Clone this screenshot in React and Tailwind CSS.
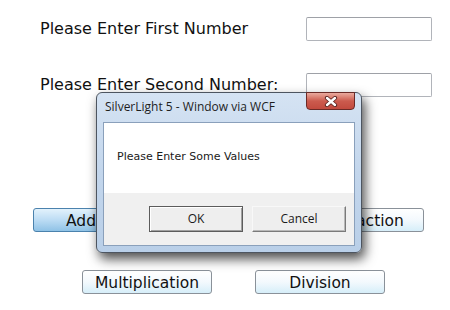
const labelFont = { fontFamily: '"DejaVu Sans", Verdana, sans-serif' };
const uiFont = { fontFamily: '"Open Sans", "Noto Sans", sans-serif' };

const TextBox = () => (
    <div className="w-[126px] h-[24px] bg-white border border-[#b1b4ba] border-t-[#9ea1a7] rounded-[2px]" />
);

const SlButton = ({ label, active }) => (
    <button
        className={
            "w-[130px] h-[24px] pt-[3px] rounded-[3px] border text-[15.5px] leading-none text-[#111] flex items-center justify-center " +
            (active
                ? "border-[#4b82ad] bg-gradient-to-b from-[#e3f2fc] via-[#bcdcf4] to-[#8fc2e6]"
                : "border-[#8a9199] bg-gradient-to-b from-[#ffffff] via-[#f3f9fd] to-[#d6eef9]")
        }
        style={labelFont}
    >
        {label}
    </button>
);

const CloseIcon = () => (
    <svg width="14" height="11" viewBox="0 0 14 11">
        <path d="M3 2 L11 9 M11 2 L3 9" stroke="#5a2420" strokeWidth="4.2" strokeLinecap="round" />
        <path d="M3 2 L11 9 M11 2 L3 9" stroke="#ffffff" strokeWidth="2.4" strokeLinecap="round" />
    </svg>
);

const Dialog = () => (
    <div className="absolute left-[96px] top-[92px] w-[266px] h-[161px] rounded-[6px] border border-[#4d5560] bg-gradient-to-b from-[#d5e3f3] via-[#c3d6ec] to-[#b9cfe8] shadow-[3px_6px_12px_rgba(0,0,0,0.7)] flex flex-col">
        <div className="h-[29px] flex items-start relative">
            <span className="pl-[8px] pt-[5px] text-[12px] text-[#1e1e1e]" style={uiFont}>
                SilverLight 5 - Window via WCF
            </span>
            <div className="absolute right-[6px] -top-px w-[49px] h-[18px] rounded-b-[4px] border border-[#6b2a26] bg-gradient-to-b from-[#e9aa9e] via-[#cc5b4e] to-[#c24a3e] flex items-center justify-center">
                <CloseIcon />
            </div>
        </div>
        <div className="mx-[6px] mb-[6px] flex-1 border border-[#8aa0bb] flex flex-col">
            <div className="h-[70px] bg-white flex items-center pl-[13px] pb-[2px]">
                <span className="text-[11px] text-[#1a1a1a]" style={labelFont}>
                    Please Enter Some Values
                </span>
            </div>
            <div className="flex-1 bg-[#f0f0f0] flex justify-end items-start pt-[13px] pr-[8px] gap-[9px]">
                <button
                    className="w-[94px] h-[26px] border border-[#5c5c5c] bg-[#eeeeee] shadow-[inset_1px_1px_0_#ffffff,inset_-1px_-1px_0_#a0a0a0] text-[12px] text-[#1a1a1a] flex items-center justify-center"
                    style={uiFont}
                >
                    OK
                </button>
                <button
                    className="w-[94px] h-[26px] border border-[#f8f8f8] border-r-[#7a7a7a] border-b-[#7a7a7a] bg-[#eeeeee] shadow-[inset_-1px_-1px_0_#b8b8b8] text-[12px] text-[#1a1a1a] flex items-center justify-center"
                    style={uiFont}
                >
                    Cancel
                </button>
            </div>
        </div>
    </div>
);

const App = () => {
    return (
        <div className="relative w-[450px] h-[310px] bg-white overflow-hidden">
            <div className="flex items-center pt-[17px] pl-[40px]">
                <span className="w-[266px] text-[16px] text-[#111]" style={labelFont}>
                    Please Enter First Number
                </span>
                <TextBox />
            </div>
            <div className="flex items-center mt-[32px] pl-[40px]">
                <span className="w-[266px] text-[16px] text-[#111]" style={labelFont}>
                    Please Enter Second Number:
                </span>
                <TextBox />
            </div>
            <div className="flex mt-[111px] pl-[33px] gap-[131px]">
                <SlButton label="Addition" active />
                <SlButton label="Subtraction" />
            </div>
            <div className="flex mt-[38px] pl-[82px] gap-[43px]">
                <SlButton label="Multiplication" />
                <SlButton label="Division" />
            </div>
            <Dialog />
        </div>
    );
};

export default App;
